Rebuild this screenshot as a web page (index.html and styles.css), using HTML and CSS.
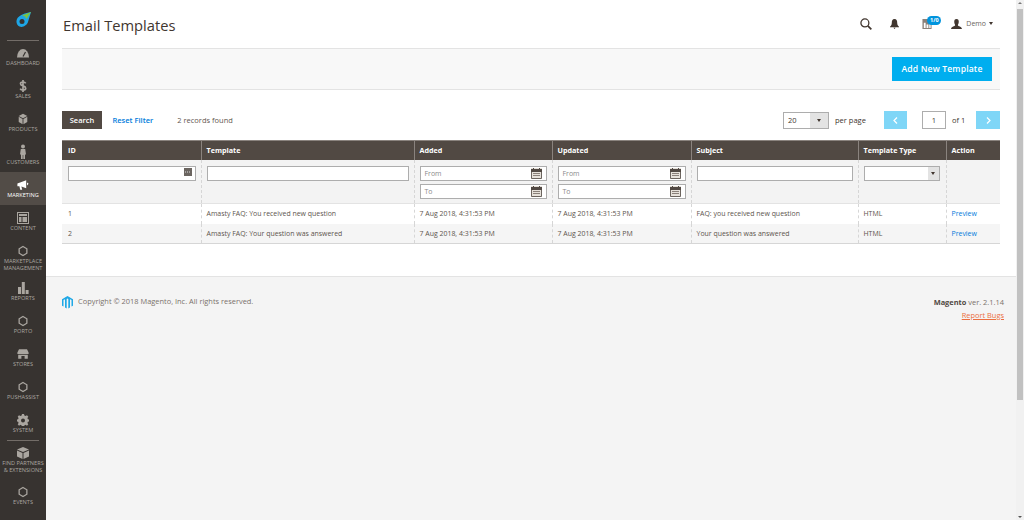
FILE: index.html
```html
<!DOCTYPE html>
<html lang="en">
<head>
<meta charset="utf-8">
<title>Email Templates</title>
<link rel="stylesheet" href="styles.css">
</head>
<body>
<div class="app">
  <nav class="menu">
    <div class="logo">
      <svg width="15" height="15" viewBox="0 0 15 15"><path d="M15 0 C9 1 4 3 1.500 6 C-.5 9 .5 13 3.500 14.500 C7 16 11 13 12 10 C13 7 14 3 15 0Z" fill="#1ea6e6"/><path d="M15 0 L6 3.500 L9 4.500 L10.500 7Z" fill="#7cc242"/><circle cx="6" cy="9.500" r="2.500" fill="#373330"/></svg>
    </div>
    <a class="item"><svg class="ic" viewBox="0 0 16 12"><path d="M2 10.500 A6 8.500 0 0 1 14 10.500Z" fill="#aaa6a0"/><path d="M8 9.500 L10.500 5" stroke="#373330" stroke-width="1.200"/></svg><span>Dashboard</span></a>
    <a class="item"><svg class="ic" viewBox="0 0 16 12"><path d="M10.700 3.300 C10.200 2.300 9.200 2 8 2 C6.500 2 5.500 2.700 5.500 3.800 C5.500 6.300 10.700 5.500 10.700 8.200 C10.700 9.400 9.500 10 8 10 C6.700 10 5.700 9.600 5.200 8.600 M8 0 V12" fill="none" stroke="#aaa6a0" stroke-width="1.700"/></svg><span>Sales</span></a>
    <a class="item"><svg class="ic" viewBox="1 -1 14 14"><path d="M8 0 L13 2.500 L8 5 L3 2.500Z M3 3.500 L7.500 6 V12 L3 9.500Z M13 3.500 L8.500 6 V12 L13 9.500Z" fill="#aaa6a0"/></svg><span>Products</span></a>
    <a class="item"><svg class="ic" viewBox="0 0 16 12"><circle cx="8" cy=".5" r="2" fill="#aaa6a0"/><path d="M5.800 3 H10.200 L11 8.500 H10 V13 H8.300 V9 H7.700 V13 H6 V8.500 H5Z" fill="#aaa6a0"/></svg><span>Customers</span></a>
    <a class="item active"><svg class="ic" viewBox="-2 -1 20 14"><path d="M1 4 L12 0 V10 L6 8 L7 12 H4.500 L3.500 7.500 H1Z M13 3 L15 4.500 L13 6.500Z" fill="#fff"/></svg><span>Marketing</span></a>
    <a class="item"><svg class="ic" viewBox="0 0 16 12"><path fill-rule="evenodd" d="M2 0 H14 V12 H2Z M3 1 V11 H13 V1Z M4 2 H12 V4 H4Z M4 5 H6.500 V10 H4Z M7.500 5 H12 V10 H7.500Z" fill="#aaa6a0"/></svg><span>Content</span></a>
    <a class="item tall"><svg class="ic" viewBox="0 -1 16 14"><path d="M8 .8 L12.500 3.400 V8.600 L8 11.200 L3.500 8.600 V3.400Z" fill="none" stroke="#aaa6a0" stroke-width="1.500"/></svg><span>Marketplace Management</span></a>
    <a class="item"><svg class="ic" viewBox="0 0 16 12"><path d="M3 5 H6 V12 H3Z M6.800 0 H9.800 V12 H6.800Z M10.600 8 H13.600 V12 H10.600Z" fill="#aaa6a0"/></svg><span>Reports</span></a>
    <a class="item"><svg class="ic" viewBox="0 -1 16 14"><path d="M8 .8 L12.500 3.400 V8.600 L8 11.200 L3.500 8.600 V3.400Z" fill="none" stroke="#aaa6a0" stroke-width="1.500"/></svg><span>Porto</span></a>
    <a class="item"><svg class="ic" viewBox="-2 -1 20 14"><path d="M3 0 H13 L15 4 V6 H1 V4Z M2 7 H14 V12 H10 V8.500 H6 V12 H2Z" fill="#aaa6a0"/></svg><span>Stores</span></a>
    <a class="item"><svg class="ic" viewBox="0 -1 16 14"><path d="M8 .8 L12.500 3.400 V8.600 L8 11.200 L3.500 8.600 V3.400Z" fill="none" stroke="#aaa6a0" stroke-width="1.500"/></svg><span>PushAssist</span></a>
    <a class="item"><svg class="ic" viewBox="0 0 16 12"><path fill-rule="evenodd" d="M7 0 H9 L9.400 1.600 L10.500 2.100 L12 1.300 L13.300 2.700 L12.400 4.100 L12.900 5.200 L14 5.600 V7.400 L12.900 7.800 L12.400 9 L13.300 10.300 L12 11.700 L10.500 10.800 L9.400 11.400 L9 12 H7 L6.600 11.400 L5.500 10.800 L4 11.700 L2.700 10.300 L3.600 9 L3.100 7.800 L2 7.400 V5.600 L3.100 5.200 L3.600 4.100 L2.700 2.700 L4 1.300 L5.500 2.100 L6.600 1.600Z M8 4.500 A2 2 0 1 0 8 8.500 A2 2 0 1 0 8 4.500Z" fill="#aaa6a0"/></svg><span>System</span></a>
    <a class="item partners"><svg class="ic" viewBox="0 0 16 12"><path d="M8 0 L14 2.500 L8 5 L2 2.500Z M2 3.500 L7.500 6 V12 L2 9.500Z M14 3.500 L8.500 6 V12 L14 9.500Z" fill="#aaa6a0"/></svg><span>Find Partners &amp; Extensions</span></a>
    <a class="item"><svg class="ic" viewBox="0 -1 16 14"><path d="M8 .8 L12.500 3.400 V8.600 L8 11.200 L3.500 8.600 V3.400Z" fill="none" stroke="#aaa6a0" stroke-width="1.500"/></svg><span>Events</span></a>
    <a class="item"><svg class="ic" viewBox="0 -1 16 14"><path d="M6 .8 H10 V6 H6Z" fill="#aaa6a0"/></svg></a>
  </nav>

  <main class="main">
    <header class="top">
      <h1 class="title">Email Templates</h1>
      <div class="tools">
        <svg class="tool-search" width="12" height="12" viewBox="0 0 13 13"><circle cx="5.300" cy="5.300" r="4.300" fill="none" stroke="#41362f" stroke-width="1.400"/><path d="M8.500 8.500 L12.300 12.300" stroke="#41362f" stroke-width="1.800"/></svg>
        <svg class="tool-bell" width="9" height="10" viewBox="0 0 10 11"><path d="M5 0 C7.500 0 8 2 8 4 C8 6.500 9 7.500 10 8.500 V9 H0 V8.500 C1 7.500 2 6.500 2 4 C2 2 2.500 0 5 0Z M3.800 9.600 H6.200 L5 11Z" fill="#41362f"/></svg>
        <div class="tool-report">
          <svg width="10" height="10" viewBox="0 0 10 11"><path fill-rule="evenodd" d="M0 0 H10 V11 H0Z M1.500 4 V10 H3.500 V4Z M4.500 6 V10 H6.500 V6Z M7.500 2 V10 H9 V2Z" fill="#8a817a"/></svg>
          <span class="badge">1/0</span>
        </div>
        <svg class="tool-user" width="11" height="10" viewBox="0 0 12 11"><path d="M6 0 C8 0 8.500 1.500 8.500 3 C8.500 5 7.500 6 7.500 6.800 C7.500 7.800 12 8.300 12 11 H0 C0 8.300 4.500 7.800 4.500 6.800 C4.500 6 3.500 5 3.500 3 C3.500 1.500 4 0 6 0Z" fill="#41362f"/></svg>
        <span class="user">Demo</span>
        <span class="caret"></span>
      </div>
    </header>

    <div class="actions">
      <a class="add">Add New Template</a>
    </div>

    <div class="toolbar">
      <a class="search">Search</a>
      <a class="reset">Reset Filter</a>
      <span class="found">2 records found</span>
      <div class="pager">
        <div class="size"><span class="size-val">20</span><span class="size-btn"></span></div>
        <span class="per">per page</span>
        <a class="nav prev"><svg width="5" height="7" viewBox="0 0 5 7"><path d="M4 .5 L1 3.500 L4 6.500" fill="none" stroke="#fff" stroke-width="1.200"/></svg></a>
        <span class="page">1</span>
        <span class="of">of 1</span>
        <a class="nav next"><svg width="5" height="7" viewBox="0 0 5 7"><path d="M1 .5 L4 3.500 L1 6.500" fill="none" stroke="#fff" stroke-width="1.200"/></svg></a>
      </div>
    </div>

    <table class="grid">
      <colgroup>
        <col class="c-id"><col class="c-tpl"><col class="c-date"><col class="c-date2"><col class="c-subj"><col class="c-type"><col class="c-act">
      </colgroup>
      <thead>
        <tr class="head">
          <th>ID</th><th>Template</th><th>Added</th><th>Updated</th><th>Subject</th><th>Template Type</th><th>Action</th>
        </tr>
        <tr class="filters">
          <td><div class="field"><svg class="dots" width="8" height="8" viewBox="0 0 8 8"><rect width="8" height="8" fill="#6b6560"/><path d="M1 4 H7" stroke="#ddd" stroke-dasharray="1 1"/></svg></div></td>
          <td><div class="field"></div></td>
          <td>
            <div class="field ph">From<svg class="cal" width="11" height="11" viewBox="0 0 11 11"><rect width="11" height="11" fill="#e6e1da"/><path fill-rule="evenodd" d="M0 1 H2 V0 H3 V1 H8 V0 H9 V1 H11 V4 H0Z" fill="#514943"/><path d="M2 5.500 H9 M2 7.500 H9" stroke="#8a817a"/><path d="M.5 4 V10.500 H10.500 V4" fill="none" stroke="#6b645e"/></svg></div>
            <div class="field ph">To<svg class="cal" width="11" height="11" viewBox="0 0 11 11"><rect width="11" height="11" fill="#e6e1da"/><path fill-rule="evenodd" d="M0 1 H2 V0 H3 V1 H8 V0 H9 V1 H11 V4 H0Z" fill="#514943"/><path d="M2 5.500 H9 M2 7.500 H9" stroke="#8a817a"/><path d="M.5 4 V10.500 H10.500 V4" fill="none" stroke="#6b645e"/></svg></div>
          </td>
          <td>
            <div class="field ph">From<svg class="cal" width="11" height="11" viewBox="0 0 11 11"><rect width="11" height="11" fill="#e6e1da"/><path fill-rule="evenodd" d="M0 1 H2 V0 H3 V1 H8 V0 H9 V1 H11 V4 H0Z" fill="#514943"/><path d="M2 5.500 H9 M2 7.500 H9" stroke="#8a817a"/><path d="M.5 4 V10.500 H10.500 V4" fill="none" stroke="#6b645e"/></svg></div>
            <div class="field ph">To<svg class="cal" width="11" height="11" viewBox="0 0 11 11"><rect width="11" height="11" fill="#e6e1da"/><path fill-rule="evenodd" d="M0 1 H2 V0 H3 V1 H8 V0 H9 V1 H11 V4 H0Z" fill="#514943"/><path d="M2 5.500 H9 M2 7.500 H9" stroke="#8a817a"/><path d="M.5 4 V10.500 H10.500 V4" fill="none" stroke="#6b645e"/></svg></div>
          </td>
          <td><div class="field"></div></td>
          <td><div class="field sel"><span class="sel-btn"></span></div></td>
          <td></td>
        </tr>
      </thead>
      <tbody>
        <tr class="row">
          <td>1</td><td>Amasty FAQ: You received new question</td><td>7 Aug 2018, 4:31:53 PM</td><td>7 Aug 2018, 4:31:53 PM</td><td>FAQ: you received new question</td><td>HTML</td><td><a class="link">Preview</a></td>
        </tr>
        <tr class="row alt">
          <td>2</td><td>Amasty FAQ: Your question was answered</td><td>7 Aug 2018, 4:31:53 PM</td><td>7 Aug 2018, 4:31:53 PM</td><td>Your question was answered</td><td>HTML</td><td><a class="link">Preview</a></td>
        </tr>
      </tbody>
    </table>

    <footer class="foot">
      <div class="copy">
        <svg width="11" height="13" viewBox="0 0 11 13"><path d="M5.500 0 L11 3.200 V9.800 L9.500 10.600 V4 L8 3.200 V11.500 L6.300 12.500 V3 L5.500 2.600 L4.700 3 V12.500 L3 11.500 V3.200 L1.500 4 V10.600 L0 9.800 V3.200Z" fill="#1fa8e6"/></svg>
        <span>Copyright © 2018 Magento, Inc. All rights reserved.</span>
      </div>
      <div class="ver">
        <div><b>Magento</b> ver. 2.1.14</div>
        <a class="bugs">Report Bugs</a>
      </div>
    </footer>
  </main>

  <div class="scroll">
    <span class="arrow up"></span>
    <div class="thumb"></div>
    <span class="arrow down"></span>
  </div>
</div>
</body>
</html>
```
FILE: styles.css
```css
* { box-sizing: border-box; }
html, body { margin: 0; height: 100%; overflow: hidden; }
body { font-family: "Open Sans", sans-serif; font-size: 7.5px; color: #41362f; background: #fff; }
.app { display: flex; height: 520px; overflow: hidden; }

.menu { width: 46px; flex: none; height: 520px; overflow: hidden; background: #373330; color: #aaa6a0; }
.logo { height: 41px; margin: 0 7px -1px; padding-top: 12px; border-bottom: 1px solid #736d68; display: flex; justify-content: center; align-items: flex-start; }
.item { display: flex; flex-direction: column; align-items: center; height: 33px; padding-top: 6.500px; text-align: center; font-size: 5.600px; line-height: 7px; text-transform: uppercase; }
.item .ic { width: 16px; height: 12px; flex: none; overflow: visible; }
.item span { display: block; margin-top: 1.800px; }
.active { background: #524c47; color: #fff; }
.tall { height: 37px; }
.partners { height: 39px; position: relative; }
.partners::before { content: ""; position: absolute; left: 7px; right: 7px; top: 0; height: 1px; background: #736d68; }
.partners span { width: 46px; }

.main { flex: 1; min-width: 0; height: 520px; display: flex; flex-direction: column; }
.top { height: 48px; display: flex; align-items: center; padding: 4px 0 0 17px; justify-content: space-between; }
.title { margin: 0 0 2px; font-size: 14.700px; font-weight: 400; color: #41362f; }
.tools { display: flex; align-items: center; margin-right: 23px; margin-top: -5px; }
.tool-search { margin-right: 18px; }
.tool-bell { margin-right: 23px; }
.tool-report { position: relative; height: 10px; display: flex; margin-right: 19px; }
.badge { position: absolute; left: 5px; top: -3px; width: 14px; height: 9px; border-radius: 5px; background: #0094dd; color: #fff; font-size: 5.500px; line-height: 9px; font-weight: 700; text-align: center; }
.tool-user { margin-right: 4px; }
.user { font-size: 7px; color: #6b6560; }
.caret { margin-left: 3px; border: 2.500px solid transparent; border-top: 3px solid #41362f; border-bottom: 0; }

.actions { height: 42px; margin: 0 16px; background: #f8f8f8; border-top: 1px solid #e3e3e3; border-bottom: 1px solid #e3e3e3; display: flex; align-items: center; justify-content: flex-end; padding-right: 8px; }
.add { width: 100px; height: 24px; background: #00aeef; color: #fff; font-size: 8.600px; font-weight: 600; line-height: 24px; text-align: center; letter-spacing: .15px; }

.toolbar { display: flex; align-items: center; height: 18px; margin: 21px 16px 11px; }
.search { width: 40px; height: 18px; background: #514943; color: #fff; font-size: 7.500px; font-weight: 600; line-height: 18px; text-align: center; }
.reset { margin-left: 10.500px; color: #007bdb; font-size: 7.500px; font-weight: 600; }
.found { margin-left: 24px; color: #5f564f; }
.pager { margin-left: auto; display: flex; align-items: center; }
.size { width: 46px; height: 17px; border: 1px solid #adadad; display: flex; background: #fff; }
.size-val { flex: 1; padding-left: 4px; line-height: 15px; }
.size-btn { width: 18px; background: #e3e3e3; position: relative; }
.size-btn::after { content: ""; position: absolute; left: 6.500px; top: 6px; border: 2.500px solid transparent; border-top: 3px solid #41362f; border-bottom: 0; }
.per { margin-left: 6px; width: 48px; }
.nav { width: 24px; height: 18px; background: #7fd6f7; display: flex; align-items: center; justify-content: center; }
.prev { width: 23px; margin-left: 1px; }
.page { width: 24px; height: 18px; margin-left: 15px; border: 1px solid #adadad; text-align: center; line-height: 16px; }
.of { margin-left: 6px; width: 24px; }

.grid { width: 938px; margin-left: 16px; border-collapse: collapse; table-layout: fixed; font-size: 6.950px; }
.c-id { width: 139px; }
.c-tpl { width: 213px; }
.c-date { width: 138px; }
.c-date2 { width: 139px; }
.c-subj { width: 167px; }
.c-type { width: 88px; }
.c-act { width: 54px; }
.head th { height: 19px; background: #514943; color: #fff; font-size: 7.200px; font-weight: 700; text-align: left; padding: 0 5px; border-left: 1px solid #8a837e; border-top: 1px solid #8a837e; }
.head th:first-child { border-left: 0; padding-left: 6px; }
.filters td { height: 44px; background: #f3f3f3; vertical-align: top; padding: 6px 4.500px 0 5px; border-left: 1px dashed #d6d6d6; border-bottom: 1px solid #e3e3e3; }
.filters td:first-child { border-left: 0; padding-left: 6px; }
.field { height: 15px; border: 1px solid #adadad; background: #fff; position: relative; margin-bottom: 3px; }
.ph { color: #8a8a8a; padding-left: 4px; line-height: 13px; }
.dots { position: absolute; right: 3px; top: 1px; }
.cal { position: absolute; right: 4px; top: 1px; }
.sel { width: 76px; }
.sel-btn { position: absolute; right: 0; top: 0; bottom: 0; width: 11px; background: #e3e3e3; }
.sel-btn::after { content: ""; position: absolute; left: 3px; top: 5.500px; border: 2.500px solid transparent; border-top: 3px solid #41362f; border-bottom: 0; }
.row td { height: 20px; padding: 0 5px; color: #5c544d; border-left: 1px dashed #d6d6d6; background: #fff; }
.row td:first-child { border-left: 0; padding-left: 6px; }
.alt td { background: #f5f5f5; border-bottom: 1px solid #d6d6d6; }
.link { color: #007bdb; }

.foot { margin-top: 32px; flex: 1; background: #f4f4f4; border-top: 1px solid #e3e3e3; display: flex; justify-content: space-between; padding: 19px 16px 0; font-size: 7.430px; color: #7a726b; }
.copy { display: flex; align-items: flex-start; gap: 5px; line-height: 11px; }
.ver { text-align: right; line-height: 13px; margin-right: -4px; }
.ver b { font-weight: 700; color: #514943; }
.bugs { color: #eb6f3f; text-decoration: underline; }

.scroll { width: 8px; flex: none; height: 520px; background: #f1f1f1; display: flex; flex-direction: column; align-items: center; }
.arrow { display: block; flex: none; height: 9px; width: 6px; position: relative; }
.arrow::after { content: ""; position: absolute; left: 1px; border: 2px solid transparent; }
.up::after { top: 2px; border-top: 0; border-bottom: 2px solid #777; }
.down { margin-top: auto; }
.down::after { bottom: 2px; border-bottom: 0; border-top: 2px solid #555; }
.thumb { width: 6px; height: 391px; background: #c1c1c1; }
```
